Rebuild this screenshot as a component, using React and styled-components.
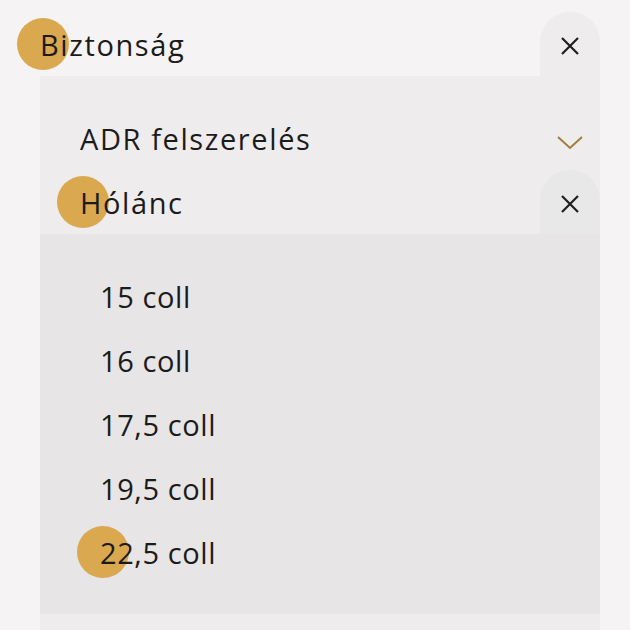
import React from 'react'
import styled, { createGlobalStyle } from 'styled-components'

const Global = createGlobalStyle`
  html, body {
    margin: 0;
    padding: 0;
    background: #f5f3f4;
    font-family: "Open Sans", "Noto Sans", sans-serif;
    font-weight: 400;
    color: #1c1b1b;
  }
`

const Page = styled.div`
  padding: 12px 30px 0 40px;
  height: 618px;
  overflow: hidden;
`

const Header = styled.div`
  display: flex;
  align-items: stretch;
  height: 64px;
  padding-left: ${p => p.$indent || 0}px;
`

const Title = styled.div`
  flex: 1;
  display: flex;
  align-items: center;
  font-size: 29px;
  letter-spacing: 1.6px;
`

const Label = styled.span`
  position: relative;
  z-index: 0;
  &::before {
    content: '';
    display: ${p => (p.$touched ? 'block' : 'none')};
    position: absolute;
    z-index: -1;
    left: -23px;
    top: 50%;
    width: 52px;
    height: 52px;
    margin-top: -26px;
    border-radius: 50%;
    background: #d9a84f;
  }
`

const CloseTab = styled.button`
  width: 60px;
  border: 0;
  padding: 4px 0 0;
  border-radius: 30px 30px 0 0;
  background: ${p => p.$bg};
  display: flex;
  align-items: center;
  justify-content: center;
  color: #1e1e1e;
`

const Panel = styled.div`
  background: ${p => p.$bg};
  padding: ${p => p.$pad};
`

const Row = styled.div`
  display: flex;
  align-items: center;
  height: 64px;
  padding-left: ${p => p.$indent || 0}px;
  font-size: 29px;
  letter-spacing: ${p => (p.$heading ? 1.6 : 0.6)}px;
`

const RowText = styled.div`
  flex: 1;
`

const Chevron = styled.div`
  width: 60px;
  display: flex;
  justify-content: center;
  padding-top: 10px;
  color: #a47d3c;
`

const Rest = styled.div`
  background: #eeeced;
  height: 40px;
`

const XIcon = () => (
  <svg width="20" height="20" viewBox="0 0 20 20">
    <path d="M2 2 L18 18 M18 2 L2 18" stroke="currentColor" strokeWidth="2.2" />
  </svg>
)

const ChevronIcon = () => (
  <svg width="28" height="16" viewBox="0 0 28 16">
    <path d="M2 2 L14 13 L26 2" fill="none" stroke="currentColor" strokeWidth="2" />
  </svg>
)

const sizes = ['15 coll', '16 coll', '17,5 coll', '19,5 coll', '22,5 coll']

export default function App() {
  return (
    <>
      <Global />
      <Page>
        <Header>
          <Title><Label $touched>Biztonság</Label></Title>
          <CloseTab $bg="#eeeced"><XIcon /></CloseTab>
        </Header>
        <Panel $bg="#eeeced" $pad="30px 0 0">
          <Row $indent={40} $heading>
            <RowText>ADR felszerelés</RowText>
            <Chevron><ChevronIcon /></Chevron>
          </Row>
          <Header $indent={40}>
            <Title><Label $touched>Hólánc</Label></Title>
            <CloseTab $bg="#e9e8e8"><XIcon /></CloseTab>
          </Header>
          <Panel $bg="#e7e5e6" $pad="30px 0">
            {sizes.map((s, i) => (
              <Row key={s} $indent={60}>
                <Label $touched={i === sizes.length - 1}>{s}</Label>
              </Row>
            ))}
          </Panel>
          <Rest />
        </Panel>
      </Page>
    </>
  )
}
